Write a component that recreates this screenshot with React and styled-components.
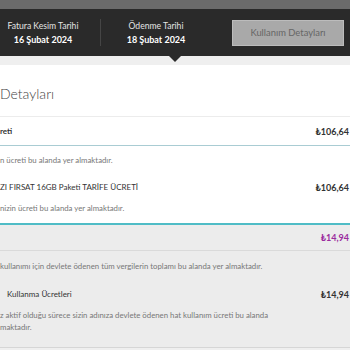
import React from 'react';
import styled, { createGlobalStyle } from 'styled-components';

const GlobalStyle = createGlobalStyle`
  html, body {
    margin: 0;
    padding: 0;
    background: #efefef;
    font-family: Lato, "Open Sans", sans-serif;
    overflow: hidden;
  }
`;

const TopStrip = styled.div`
  height: 9px;
  background: #6b6b6b;
`;

const Header = styled.header`
  position: relative;
  height: 47px;
  background: #2a2a2a;
  display: flex;
  align-items: center;

  &::after {
    content: '';
    position: absolute;
    left: 169px;
    bottom: -6px;
    border-left: 6px solid transparent;
    border-right: 6px solid transparent;
    border-top: 6px solid #2a2a2a;
  }
`;

const DateBlock = styled.div`
  width: ${p => p.width}px;
  margin-left: ${p => p.offset || 0}px;
  text-align: center;
  color: #e4e4e4;
`;

const DateLabel = styled.div`
  font-size: 8.6px;
  line-height: 13px;
`;

const DateValue = styled.div`
  font-size: 9px;
  font-weight: 700;
  color: #fff;
  line-height: 13px;
`;

const Divider = styled.div`
  width: 1px;
  height: 27px;
  margin-left: 14px;
  background: #454545;
`;

const UsageButton = styled.button`
  margin-left: 32px;
  width: 112px;
  height: 26px;
  background: #a9a9a9;
  border: 1px solid #bcbcbc;
  color: #666;
  font-family: inherit;
  font-size: 9.4px;
  padding: 0;
`;

const Card = styled.section`
  margin-top: 9px;
  background: #fff;
  border-bottom: 1px solid #d6d6d6;
`;

const Title = styled.h2`
  margin: 0;
  height: 52px;
  display: flex;
  align-items: center;
  padding-top: 6px;
  box-sizing: border-box;
  font-size: 14px;
  font-weight: 300;
  color: #444;
  border-bottom: 1px solid #ececec;
`;

const Group = styled.div`
  background: ${p => (p.shaded ? '#ececec' : '#fff')};
  border-bottom: ${p => (p.last ? 'none' : '2px solid #4fbcc6')};
`;

const Row = styled.div`
  display: flex;
  justify-content: space-between;
  align-items: center;
  height: ${p => p.h || 28}px;
  padding-left: ${p => p.indent || 0}px;
  font-size: 8px;
  font-weight: ${p => (p.bold ? 700 : 400)};
  color: #333;
  border-bottom: ${p => p.line || 'none'};
`;

const Price = styled.span`
  font-weight: 700;
  font-size: 9px;
  color: ${p => p.color || '#333'};
  padding-right: 1px;
`;

const Desc = styled.p`
  margin: 0;
  padding: ${p => p.pad || '8px 0'};
  font-size: 7.8px;
  line-height: 12px;
  color: #777;
`;

export default function App() {
  return (
    <>
      <GlobalStyle />
      <TopStrip />
      <Header>
        <DateBlock width={86}>
          <DateLabel>Fatura Kesim Tarihi</DateLabel>
          <DateValue>16 Şubat 2024</DateValue>
        </DateBlock>
        <Divider />
        <DateBlock width={88} offset={11}>
          <DateLabel>Ödenme Tarihi</DateLabel>
          <DateValue>18 Şubat 2024</DateValue>
        </DateBlock>
        <UsageButton>Kullanım Detayları</UsageButton>
      </Header>
      <Card>
        <Title>Detayları</Title>
        <Group>
          <Row bold line="1px solid #a9ccd3">
            <span>reti</span>
            <Price>₺106,64</Price>
          </Row>
          <Desc pad="8px 0">n ücreti bu alanda yer almaktadır.</Desc>
          <Row h={26}>
            <span>ZI FIRSAT 16GB Paketi TARİFE ÜCRETİ</span>
            <Price>₺106,64</Price>
          </Row>
          <Desc pad="2px 0 9px">nizin ücreti bu alanda yer almaktadır.</Desc>
        </Group>
        <Group shaded last>
          <Row h={25} line="1px solid #dadada">
            <span />
            <Price color="#9b2c9e">₺14,94</Price>
          </Row>
          <Desc pad="9px 0 10px"> kullanımı için devlete ödenen tüm vergilerin toplamı bu alanda yer almaktadır.</Desc>
          <Row h={24} indent={7}>
            <span>Kullanma Ücretleri</span>
            <Price>₺14,94</Price>
          </Row>
          <Desc pad="3px 0 14px">
            z aktif olduğu sürece sizin adınıza devlete ödenen hat kullanım ücreti bu alanda
            <br />
            maktadır.
          </Desc>
        </Group>
      </Card>
    </>
  );
}
